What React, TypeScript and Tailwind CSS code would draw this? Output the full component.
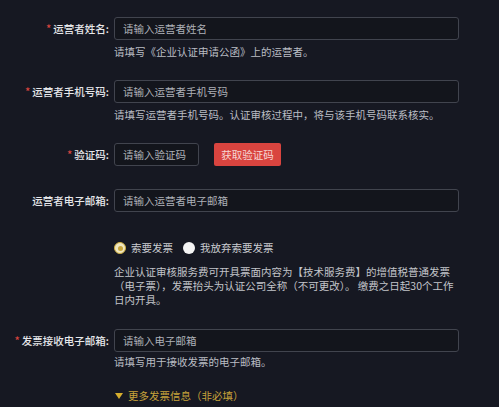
import React from "react"

const font = { fontFamily: '"Noto Sans CJK SC", "Noto Sans", sans-serif' }

function Label({ text, required }: { text: string; required?: boolean }) {
  return (
    <div className="w-[114px] shrink-0 pr-[5px] text-right text-[10.5px] leading-[14px] font-medium text-[#e6e7ea]">
      {required && <span className="mr-[2px] text-[11px] text-[#d8443f]">*</span>}
      {text}:
    </div>
  )
}

function Field({ placeholder, width = "w-[345px]" }: { placeholder: string; width?: string }) {
  return (
    <div
      className={`${width} flex h-[23px] items-center rounded-[3px] border border-[#41444e] bg-[#13151c] px-[8px] text-[10.5px] text-[#aeb1b8]`}
    >
      {placeholder}
    </div>
  )
}

function Help({ children, className = "" }: { children: React.ReactNode; className?: string }) {
  return (
    <div className={`ml-[114px] text-[10.5px] leading-[14px] text-[#babdc4] ${className}`}>{children}</div>
  )
}

export default function App() {
  return (
    <div className="min-h-screen w-full bg-[#161822] pt-[17px]" style={font}>
      <div className="flex items-center">
        <Label text="运营者姓名" required />
        <Field placeholder="请输入运营者姓名" />
      </div>
      <Help className="mt-[5px]">请填写《企业认证申请公函》上的运营者。</Help>

      <div className="mt-[21px] flex items-center">
        <Label text="运营者手机号码" required />
        <Field placeholder="请输入运营者手机号码" />
      </div>
      <Help className="mt-[5px]">请填写运营者手机号码。认证审核过程中，将与该手机号码联系核实。</Help>

      <div className="mt-[21px] flex items-center">
        <Label text="验证码" required />
        <Field placeholder="请输入验证码" width="w-[85px]" />
        <button className="ml-[15px] flex h-[23px] w-[67px] items-center justify-center rounded-[2px] bg-[#d9443f] text-[10.5px] text-[#f6d6d4]">
          获取验证码
        </button>
      </div>

      <div className="mt-[23px] flex items-center">
        <Label text="运营者电子邮箱" />
        <Field placeholder="请输入运营者电子邮箱" />
      </div>

      <div className="ml-[114px] mt-[29px] flex h-[14px] items-center text-[10.5px] text-[#c9cbd0]">
        <span className="flex h-[12px] w-[12px] items-center justify-center rounded-full border border-[#cfae3e] bg-[#efe6bf]">
          <span className="h-[5px] w-[5px] rounded-full bg-[#c9a53a]" />
        </span>
        <span className="ml-[5px]">索要发票</span>
        <span className="ml-[10px] h-[12px] w-[12px] rounded-full bg-[#f4f4f4]" />
        <span className="ml-[5px]">我放弃索要发票</span>
      </div>

      <Help className="mt-[10px] whitespace-nowrap leading-[14.5px] text-[#c3c5ca]">
        企业认证审核服务费可开具票面内容为【技术服务费】的增值税普通发票
        <br />
        （电子票），发票抬头为认证公司全称（不可更改）。 缴费之日起30个工作
        <br />
        日内开具。
      </Help>

      <div className="mt-[22px] flex items-center">
        <Label text="发票接收电子邮箱" required />
        <Field placeholder="请输入电子邮箱" />
      </div>
      <Help className="mt-[3px]">请填写用于接收发票的电子邮箱。</Help>

      <div className="ml-[114px] mt-[20px] flex items-center text-[10.5px] leading-[14px] text-[#c6a23a]">
        <svg width="8" height="6" viewBox="0 0 8 6" className="ml-[1px] mr-[5px]">
          <path d="M0 0 H8 L4 6 Z" fill="#d6ae2e" />
        </svg>
        更多发票信息（非必填）
      </div>
    </div>
  )
}
